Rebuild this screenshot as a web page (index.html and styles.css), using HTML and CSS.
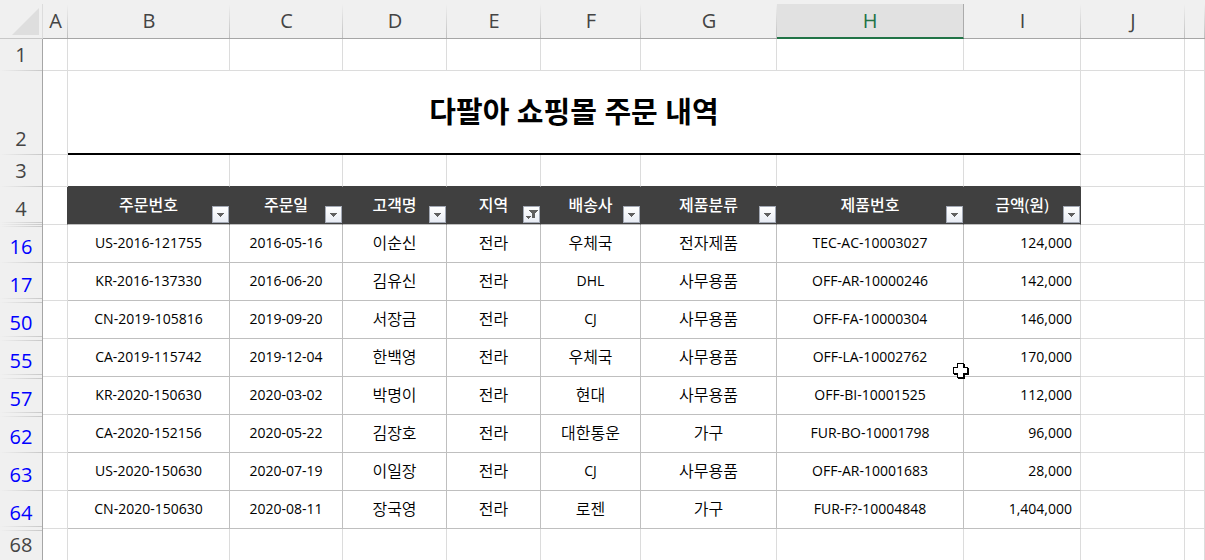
FILE: index.html
```html
<!DOCTYPE html>
<html lang="ko">

<head>
    <meta charset="UTF-8">
    <meta name="viewport" content="width=device-width, initial-scale=1.0">
    <title>다팔아 쇼핑몰 주문 내역</title>
    <link rel="stylesheet" href="styles.css">
</head>

<body>
    <table class="sheet">
        <colgroup>
            <col class="col-head">
            <col class="col-a">
            <col class="col-b">
            <col class="col-c">
            <col class="col-d">
            <col class="col-e">
            <col class="col-f">
            <col class="col-g">
            <col class="col-h">
            <col class="col-i">
            <col class="col-j">
            <col class="col-k">
        </colgroup>
        <thead>
            <tr class="letters">
                <th class="corner"><svg width="43" height="34" viewBox="0 0 43 34"><path d="M39 4v27H12z" fill="#dedede"/></svg></th>
                <th scope="col">A</th>
                <th scope="col">B</th>
                <th scope="col">C</th>
                <th scope="col">D</th>
                <th scope="col">E</th>
                <th scope="col">F</th>
                <th scope="col">G</th>
                <th scope="col" class="selected">H</th>
                <th scope="col">I</th>
                <th scope="col">J</th>
                <th scope="col"></th>
            </tr>
        </thead>
        <tbody>
            <tr class="short">
                <th scope="row">1</th>
                <td></td><td></td><td></td><td></td><td></td><td></td><td></td><td></td><td></td><td></td><td></td>
            </tr>
            <tr class="tall">
                <th scope="row">2</th>
                <td></td>
                <td class="title" colspan="8">다팔아 쇼핑몰 주문 내역</td>
                <td></td><td></td>
            </tr>
            <tr class="short above-fields">
                <th scope="row">3</th>
                <td></td><td></td><td></td><td></td><td></td><td></td><td></td><td></td><td></td><td></td><td></td>
            </tr>
            <tr class="fields">
                <th scope="row" class="gap-after">4</th>
                <td class="beside-fields"></td>
                <td class="field">주문번호<button class="filter" aria-label="주문번호 필터"><svg width="15" height="15" viewBox="0 0 15 15"><path d="M4 6h7v1h-1v1H9v1H8v1H7V9H6V8H5V7H4z"/></svg></button></td>
                <td class="field">주문일<button class="filter" aria-label="주문일 필터"><svg width="15" height="15" viewBox="0 0 15 15"><path d="M4 6h7v1h-1v1H9v1H8v1H7V9H6V8H5V7H4z"/></svg></button></td>
                <td class="field">고객명<button class="filter" aria-label="고객명 필터"><svg width="15" height="15" viewBox="0 0 15 15"><path d="M4 6h7v1h-1v1H9v1H8v1H7V9H6V8H5V7H4z"/></svg></button></td>
                <td class="field">지역<button class="filter" aria-label="지역 필터"><svg width="15" height="15" viewBox="0 0 15 15"><path d="M5 3h9v1h-1v1h-1v1h-1v5H8V6H7V5H6V4H5zM2 9h5v1H6v1H5v1H4v-1H3v-1H2z"/></svg></button></td>
                <td class="field">배송사<button class="filter" aria-label="배송사 필터"><svg width="15" height="15" viewBox="0 0 15 15"><path d="M4 6h7v1h-1v1H9v1H8v1H7V9H6V8H5V7H4z"/></svg></button></td>
                <td class="field">제품분류<button class="filter" aria-label="제품분류 필터"><svg width="15" height="15" viewBox="0 0 15 15"><path d="M4 6h7v1h-1v1H9v1H8v1H7V9H6V8H5V7H4z"/></svg></button></td>
                <td class="field">제품번호<button class="filter" aria-label="제품번호 필터"><svg width="15" height="15" viewBox="0 0 15 15"><path d="M4 6h7v1h-1v1H9v1H8v1H7V9H6V8H5V7H4z"/></svg></button></td>
                <td class="field">금액(원)<button class="filter" aria-label="금액(원) 필터"><svg width="15" height="15" viewBox="0 0 15 15"><path d="M4 6h7v1h-1v1H9v1H8v1H7V9H6V8H5V7H4z"/></svg></button></td>
                <td></td><td></td>
            </tr>
            <tr class="order">
                <th scope="row" class="gap-before">16</th>
                <td></td>
                <td class="code">US-2016-121755</td>
                <td class="code">2016-05-16</td>
                <td>이순신</td>
                <td>전라</td>
                <td>우체국</td>
                <td>전자제품</td>
                <td class="code">TEC-AC-10003027</td>
                <td class="amount">124,000</td>
                <td></td><td></td>
            </tr>
            <tr class="order">
                <th scope="row" class="gap-after">17</th>
                <td></td>
                <td class="code">KR-2016-137330</td>
                <td class="code">2016-06-20</td>
                <td>김유신</td>
                <td>전라</td>
                <td class="code">DHL</td>
                <td>사무용품</td>
                <td class="code">OFF-AR-10000246</td>
                <td class="amount">142,000</td>
                <td></td><td></td>
            </tr>
            <tr class="order">
                <th scope="row" class="gap-before gap-after">50</th>
                <td></td>
                <td class="code">CN-2019-105816</td>
                <td class="code">2019-09-20</td>
                <td>서장금</td>
                <td>전라</td>
                <td class="code">CJ</td>
                <td>사무용품</td>
                <td class="code">OFF-FA-10000304</td>
                <td class="amount">146,000</td>
                <td></td><td></td>
            </tr>
            <tr class="order">
                <th scope="row" class="gap-before gap-after">55</th>
                <td></td>
                <td class="code">CA-2019-115742</td>
                <td class="code">2019-12-04</td>
                <td>한백영</td>
                <td>전라</td>
                <td>우체국</td>
                <td>사무용품</td>
                <td class="code">OFF-LA-10002762<svg class="cursor" width="16" height="16" viewBox="0 0 16 16"><path d="M5 1h7v4h4v7h-4v4H5v-4H1V5h4z" fill="#000"/><path d="M4 0h7v4h4v7h-4v4H4v-4H0V4h4z" fill="#000"/><path d="M5 1h5v4h4v5h-4v4H5v-4H1V5h4z" fill="#fff"/></svg></td>
                <td class="amount">170,000</td>
                <td></td><td></td>
            </tr>
            <tr class="order">
                <th scope="row" class="gap-before gap-after">57</th>
                <td></td>
                <td class="code">KR-2020-150630</td>
                <td class="code">2020-03-02</td>
                <td>박명이</td>
                <td>전라</td>
                <td>현대</td>
                <td>사무용품</td>
                <td class="code">OFF-BI-10001525</td>
                <td class="amount">112,000</td>
                <td></td><td></td>
            </tr>
            <tr class="order">
                <th scope="row" class="gap-before">62</th>
                <td></td>
                <td class="code">CA-2020-152156</td>
                <td class="code">2020-05-22</td>
                <td>김장호</td>
                <td>전라</td>
                <td>대한통운</td>
                <td>가구</td>
                <td class="code">FUR-BO-10001798</td>
                <td class="amount">96,000</td>
                <td></td><td></td>
            </tr>
            <tr class="order">
                <th scope="row">63</th>
                <td></td>
                <td class="code">US-2020-150630</td>
                <td class="code">2020-07-19</td>
                <td>이일장</td>
                <td>전라</td>
                <td class="code">CJ</td>
                <td>사무용품</td>
                <td class="code">OFF-AR-10001683</td>
                <td class="amount">28,000</td>
                <td></td><td></td>
            </tr>
            <tr class="order">
                <th scope="row" class="gap-after">64</th>
                <td></td>
                <td class="code">CN-2020-150630</td>
                <td class="code">2020-08-11</td>
                <td>장국영</td>
                <td>전라</td>
                <td>로젠</td>
                <td>가구</td>
                <td class="code">FUR-F?-10004848</td>
                <td class="amount">1,404,000</td>
                <td></td><td></td>
            </tr>
            <tr class="short">
                <th scope="row" class="gap-before">68</th>
                <td></td><td></td><td></td><td></td><td></td><td></td><td></td><td></td><td></td><td></td><td></td>
            </tr>
        </tbody>
    </table>
</body>

</html>
```

FILE: styles.css
```css
* {
    box-sizing: border-box;
}

body {
    margin: 0;
    padding-top: 4px;
    background-color: #f0f0f0;
    font-family: "Open Sans", "Noto Sans CJK KR", sans-serif;
    color: #000;
    overflow: hidden;
}

.sheet {
    width: 100%;
    table-layout: fixed;
    border-collapse: separate;
    border-spacing: 0;
    background-color: #fff;
}

.col-head { width: 43px; }
.col-a { width: 25px; }
.col-b { width: 162px; }
.col-c { width: 113px; }
.col-d { width: 104px; }
.col-e { width: 94px; }
.col-f { width: 100px; }
.col-g { width: 136px; }
.col-h { width: 187px; }
.col-i { width: 117px; }
.col-j { width: 104px; }
.col-k { width: 20px; }

th,
td {
    padding: 0;
    border-right: 1px solid #dcdcdc;
    border-bottom: 1px solid #dcdcdc;
    text-align: center;
    white-space: nowrap;
}

/* column letters */
.letters {
    height: 35px;
}

.letters th {
    border-right: 0;
    border-bottom-color: #a6a6a6;
    background: linear-gradient(to bottom, #f0f0f0, #c0c0c0) right / 1px 100% no-repeat #f0f0f0;
    color: #444;
    font-size: 20px;
    font-weight: 400;
    line-height: 28px;
}

.letters .corner {
    background: #f0f0f0;
    border-right: 1px solid #dcdcdc;
    border-bottom-color: #c8c8c8;
}

.corner svg {
    display: block;
}

.letters .selected {
    background: #e1e1e1;
    border-right: 1px solid #ababab;
    border-bottom: 2px solid #217346;
    color: #217346;
}

/* row numbers */
tbody th {
    position: relative;
    padding-bottom: 2px;
    border-right-color: #a6a6a6;
    border-bottom: 0;
    background: linear-gradient(to right, #f0f0f0, #c8c8c8) bottom / 100% 1px no-repeat #f0f0f0;
    color: #444;
    font-size: 20px;
    font-weight: 400;
    line-height: 28px;
    vertical-align: bottom;
}

.order th {
    color: #00f;
}

/* double rule where filtered rows are hidden */
.gap-before::before,
.gap-after::after {
    content: "";
    position: absolute;
    left: 0;
    right: 0;
    height: 1px;
    background: linear-gradient(to right, #f0f0f0, #c8c8c8);
}

.gap-before::before {
    top: 1px;
}

.gap-after::after {
    bottom: 2px;
}

.order .gap-after {
    background: #f0f0f0;
}

.short {
    height: 32px;
}

.tall {
    height: 84px;
}

.title {
    border-bottom: 2px solid #000;
    font-size: 29px;
    font-weight: 700;
    line-height: 40px;
}

.fields,
.order {
    height: 38px;
}

.above-fields td:nth-child(n+3):nth-child(-n+10) {
    border-bottom-color: #404040;
}

.beside-fields {
    border-right-color: #404040;
}

.fields .field {
    position: relative;
    padding-bottom: 2px;
    border-right-color: #404040;
    border-bottom-color: #bfbfbf;
    background-color: #404040;
    color: #fff;
    font-size: 16px;
    font-weight: 500;
    line-height: 22px;
}

.filter {
    position: absolute;
    right: 0;
    bottom: 1px;
    width: 17px;
    height: 17px;
    padding: 0;
    border: 1px solid #a3a9b5;
    background: linear-gradient(to bottom, #fff, #e8ecf4);
}

.filter svg {
    display: block;
    fill: #606060;
}

.order td {
    padding-bottom: 2px;
    font-size: 16px;
    font-weight: 350;
    line-height: 22px;
}

.order td:nth-child(n+3):nth-child(-n+10) {
    border-bottom-color: #bfbfbf;
}

.order td:nth-child(n+3):nth-child(-n+9) {
    border-right-color: #bfbfbf;
}

.order .code,
.order .amount {
    font-size: 14px;
    font-weight: 400;
}

.order .code {
    position: relative;
}

.order .amount {
    padding-right: 8px;
    text-align: right;
}

/* sheet pointer */
.cursor {
    position: absolute;
    right: -6px;
    bottom: -3px;
    z-index: 1;
}
```
